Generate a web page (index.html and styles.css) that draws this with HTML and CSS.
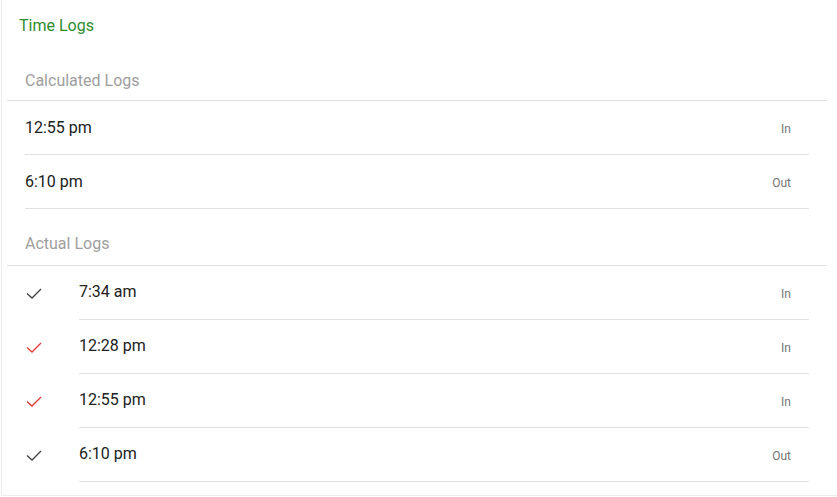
FILE: index.html
```html
<!DOCTYPE html>
<html>
<head>
<meta charset="utf-8">
<link rel="stylesheet" href="styles.css">
</head>
<body>
<div class="card">
  <div class="title">Time Logs</div>
  <div class="inner">
    <div class="subheader first">Calculated Logs</div>
    <ul class="list">
      <li class="row plain"><span class="time">12:55 pm</span><span class="type">In</span></li>
      <li class="row plain"><span class="time">6:10 pm</span><span class="type">Out</span></li>
    </ul>
    <div class="subheader">Actual Logs</div>
    <ul class="list">
      <li class="row iconed">
        <span class="icon"><svg width="20" height="14" viewBox="0 0 20 14"><polyline points="2,6.5 7,11 16,2" class="ok"/></svg></span>
        <span class="content"><span class="time">7:34 am</span><span class="type">In</span></span>
      </li>
      <li class="row iconed">
        <span class="icon"><svg width="20" height="14" viewBox="0 0 20 14"><polyline points="2,6.5 7,11 16,2" class="bad"/></svg></span>
        <span class="content"><span class="time">12:28 pm</span><span class="type">In</span></span>
      </li>
      <li class="row iconed">
        <span class="icon"><svg width="20" height="14" viewBox="0 0 20 14"><polyline points="2,6.5 7,11 16,2" class="bad"/></svg></span>
        <span class="content"><span class="time">12:55 pm</span><span class="type">In</span></span>
      </li>
      <li class="row iconed">
        <span class="icon"><svg width="20" height="14" viewBox="0 0 20 14"><polyline points="2,6.5 7,11 16,2" class="ok"/></svg></span>
        <span class="content"><span class="time">6:10 pm</span><span class="type">Out</span></span>
      </li>
    </ul>
  </div>
</div>
</body>
</html>
```
FILE: styles.css
```css
* { box-sizing: border-box; }
html, body { margin: 0; padding: 0; background: #fff; }
body { font-family: Roboto, "Liberation Sans", sans-serif; }

.card {
  margin-left: 1px;
  width: 840px;
  height: 496px;
  border-left: 1px solid #ececec;
  border-bottom: 1px solid #ececec;
  overflow: hidden;
}

.title {
  padding: 15px 0 7px 17px;
  line-height: 22px;
  font-size: 16px;
  color: #2e8b2e;
}

.inner {
  padding-left: 5px;
  width: 825px;
}

.subheader {
  padding: 24px 18px 10px;
  line-height: 22px;
  font-size: 16px;
  color: #9e9e9e;
  border-bottom: 1px solid #e0e0e0;
}

.subheader.first {
  padding-top: 26px;
  padding-bottom: 8px;
}

.list {
  list-style: none;
  margin: 0;
  padding: 0 18px;
}

.row {
  display: flex;
  align-items: center;
  height: 54px;
}

.row.plain {
  justify-content: space-between;
  border-bottom: 1px solid #e0e0e0;
}

.time {
  font-size: 16px;
  color: #212121;
}

.iconed .time {
  padding-bottom: 2px;
}

.type {
  font-size: 12px;
  color: #757575;
  padding-right: 18px;
  padding-top: 2px;
}

.icon {
  width: 54px;
  height: 54px;
  flex: none;
  display: flex;
  align-items: center;
  padding-top: 2px;
}

.icon svg polyline {
  fill: none;
  stroke-width: 1.3;
}

.icon .ok { stroke: #424242; }
.icon .bad { stroke: #e53935; }

.content {
  flex: 1;
  height: 54px;
  display: flex;
  align-items: center;
  justify-content: space-between;
  border-bottom: 1px solid #e0e0e0;
}
```
